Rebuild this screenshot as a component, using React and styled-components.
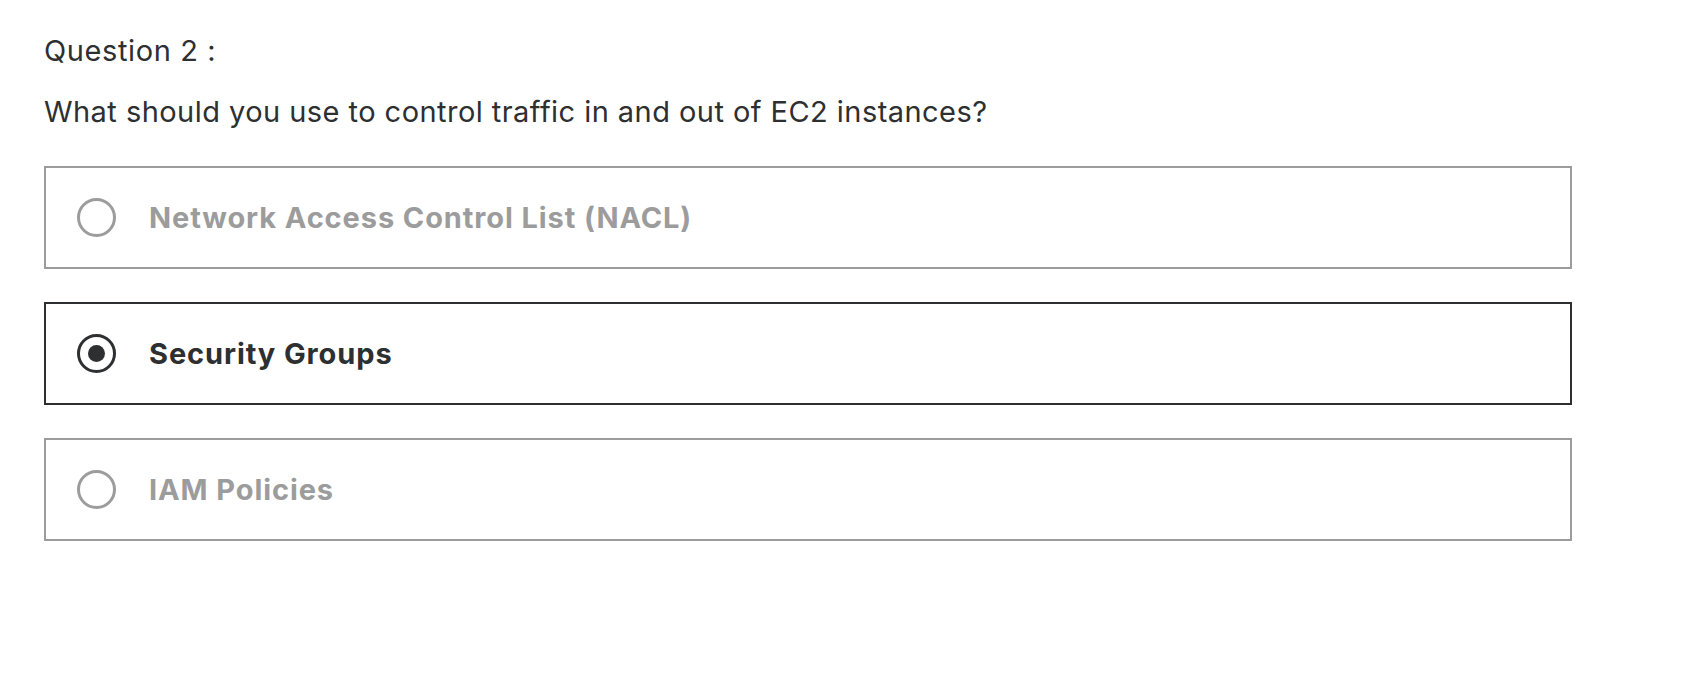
import React from "react";
import styled, { createGlobalStyle } from "styled-components";

const Global = createGlobalStyle`
  html, body { margin: 0; padding: 0; background: #fff; }
  body { font-family: Inter, "Noto Sans", sans-serif; color: #2d2f31; }
`;

const Page = styled.div`
  padding: 31px 128px 40px 44px;
  display: flex;
  flex-direction: column;
`;

const Label = styled.div`
  font-size: 29px;
  line-height: 40px;
  font-weight: 400;
  letter-spacing: 0.6px;
  color: #2d2f31;
`;

const Prompt = styled.div`
  font-size: 29px;
  line-height: 40px;
  letter-spacing: 0.45px;
  margin-top: 21px;
  color: #2d2f31;
`;

const Options = styled.ul`
  list-style: none;
  margin: 34px 0 0;
  padding: 0;
  display: flex;
  flex-direction: column;
  gap: 33px;
  width: 1528px;
`;

const Option = styled.li`
  box-sizing: border-box;
  height: 103px;
  border: 2px solid ${(p) => (p.$selected ? "#2d2f31" : "#9c9c9c")};
  display: flex;
  align-items: center;
  padding-left: 31px;
  gap: 33px;
  cursor: pointer;
`;

const Radio = styled.span`
  box-sizing: border-box;
  width: 39px;
  height: 39px;
  border-radius: 50%;
  border: 3px solid ${(p) => (p.$selected ? "#2d2f31" : "#9c9c9c")};
  display: flex;
  align-items: center;
  justify-content: center;
  flex: none;
  &::after {
    content: "";
    display: ${(p) => (p.$selected ? "block" : "none")};
    width: 17px;
    height: 17px;
    border-radius: 50%;
    background: #2d2f31;
  }
`;

const OptionText = styled.span`
  font-size: 29px;
  font-weight: 700;
  letter-spacing: 0.9px;
  color: ${(p) => (p.$selected ? "#2d2f31" : "#9c9c9c")};
`;

const options = [
  { text: "Network Access Control List (NACL)", selected: false },
  { text: "Security Groups", selected: true },
  { text: "IAM Policies", selected: false },
];

export default function App() {
  return (
    <>
      <Global />
      <Page>
        <Label>Question 2 :</Label>
        <Prompt>What should you use to control traffic in and out of EC2 instances?</Prompt>
        <Options>
          {options.map((o) => (
            <Option key={o.text} $selected={o.selected}>
              <Radio $selected={o.selected} />
              <OptionText $selected={o.selected}>{o.text}</OptionText>
            </Option>
          ))}
        </Options>
      </Page>
    </>
  );
}
